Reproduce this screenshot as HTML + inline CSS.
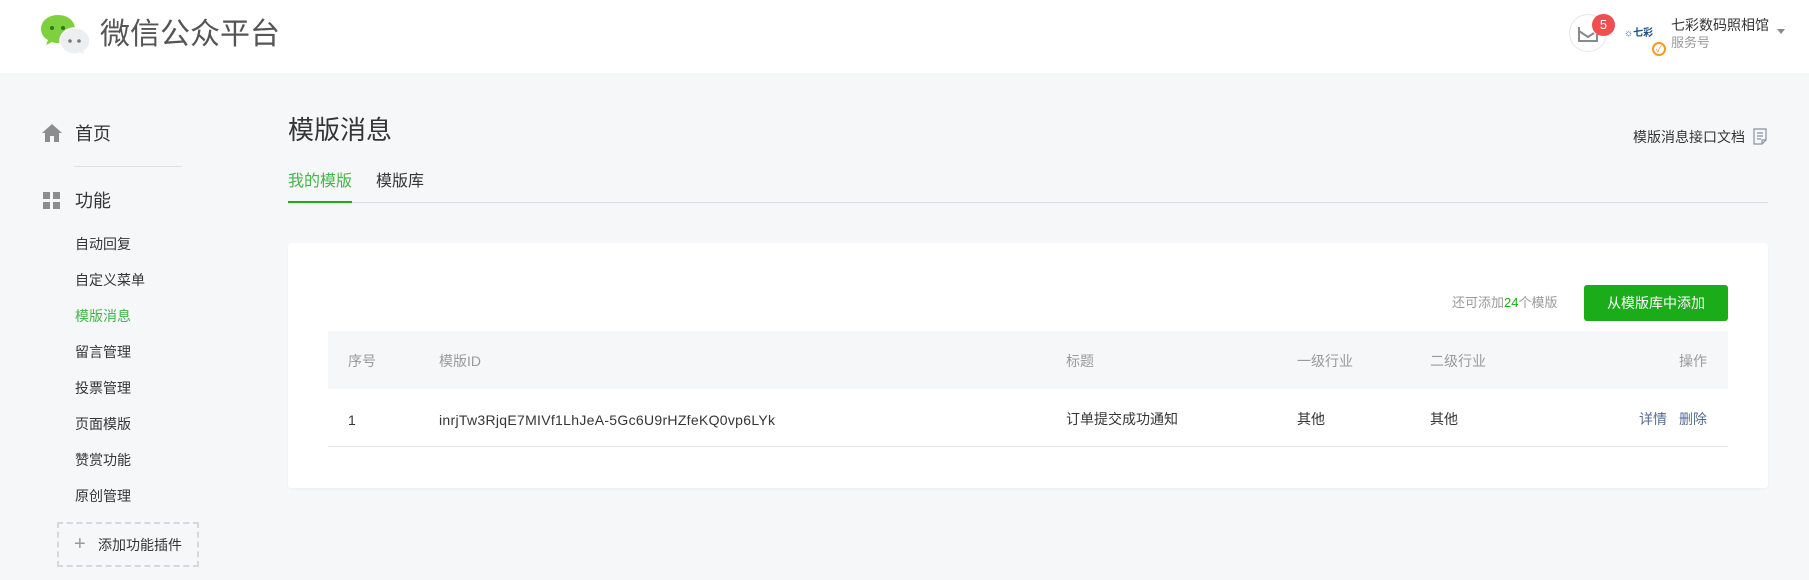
<!DOCTYPE html>
<html><head><meta charset="utf-8"><style>
*{margin:0;padding:0;box-sizing:border-box}
body{width:1809px;height:580px;background:#f6f7f9;font-family:"Liberation Sans","Noto Sans CJK SC",sans-serif;color:#353535;position:relative;overflow:hidden}
.a{position:absolute;white-space:nowrap}
.hdr{position:absolute;left:0;top:0;width:1809px;height:73px;background:#fff}
.sub{position:absolute;left:75px;font-size:14px;line-height:20px}
.th{font-size:14px;line-height:20px;color:#9a9a9a}
.td{font-size:14px;line-height:20px;color:#353535}
</style></head><body>
<div class="hdr"></div>
<svg class="a" style="left:40px;top:14px" width="52" height="46" viewBox="0 0 52 46">
<path d="M18 1C8 1 1 7 1 15c0 5 3 9 7 11l-2 5 6-3c2 1 4 1 6 1 10 0 17-6 17-14S28 1 18 1z" fill="#7ed03f"/>
<circle cx="12" cy="14" r="2" fill="#2a7a1a"/><circle cx="23" cy="14" r="2" fill="#2a7a1a"/>
<path d="M35 14c-9 0-15 6-15 13s6 13 15 13c2 0 3 0 5-1l5 3-1-5c4-2 6-6 6-10 0-7-6-13-15-13z" fill="#eceef0" stroke="#fff" stroke-width="1.5"/>
<circle cx="30" cy="27" r="1.8" fill="#7a7a7a"/><circle cx="39" cy="27" r="1.8" fill="#7a7a7a"/>
</svg>
<div class="a" style="left:100px;top:16px;font-size:30px;line-height:38px;color:#555">微信公众平台</div>
<div class="a" style="left:1569px;top:14px;width:38px;height:38px;border:1px solid #e4e6e8;border-radius:50%;background:#fff"></div>
<svg class="a" style="left:1578px;top:26px" width="20" height="16" viewBox="0 0 20 16"><path d="M1 1v14h18V8M1 5l9 6 6-4" fill="none" stroke="#8a8a8a" stroke-width="2"/></svg>
<div class="a" style="left:1592px;top:14px;width:23px;height:22px;border-radius:11px;background:#f14f4f;color:#fff;font-size:13px;line-height:22px;text-align:center">5</div>
<div class="a" style="left:1624px;top:24px;font-size:10px;color:#1c4f8a;font-weight:bold">☼七彩</div>
<div class="a" style="left:1652px;top:42px;width:14px;height:14px;border:2px solid #f39b22;border-radius:50%;font-size:9px;color:#f39b22;line-height:10px;text-align:center">✓</div>
<div class="a" style="left:1671px;top:15px;font-size:14px;line-height:20px;color:#353535">七彩数码照相馆</div>
<div class="a" style="left:1671px;top:34px;font-size:13px;line-height:18px;color:#9a9a9a">服务号</div>
<div class="a" style="left:1777px;top:29px;width:0;height:0;border:4px solid transparent;border-top:5px solid #8a8a8a"></div>

<svg class="a" style="left:42px;top:124px" width="20" height="18" viewBox="0 0 20 18"><path d="M10 0L0 9h3v9h5v-6h4v6h5V9h3z" fill="#8d8d8d"/></svg>
<div class="a" style="left:75px;top:122px;font-size:18px;line-height:24px">首页</div>
<div class="a" style="left:74px;top:166px;width:108px;height:1px;background:#e0e1e3"></div>
<div class="a" style="left:43px;top:192px;width:7px;height:7px;background:#8d8d8d"></div>
<div class="a" style="left:53px;top:192px;width:7px;height:7px;background:#8d8d8d"></div>
<div class="a" style="left:43px;top:202px;width:7px;height:7px;background:#8d8d8d"></div>
<div class="a" style="left:53px;top:202px;width:7px;height:7px;background:#8d8d8d"></div>
<div class="a" style="left:75px;top:189px;font-size:18px;line-height:24px">功能</div>
<div class="sub" style="top:234px">自动回复</div>
<div class="sub" style="top:270px">自定义菜单</div>
<div class="sub" style="top:306px;color:#44b549">模版消息</div>
<div class="sub" style="top:342px">留言管理</div>
<div class="sub" style="top:378px">投票管理</div>
<div class="sub" style="top:414px">页面模版</div>
<div class="sub" style="top:450px">赞赏功能</div>
<div class="sub" style="top:486px">原创管理</div>
<div class="a" style="left:57px;top:522px;width:142px;height:45px;border:2px dashed #d6d8db"></div>
<div class="a" style="left:74px;top:535px;font-size:20px;line-height:18px;color:#999;font-weight:300">+</div>
<div class="a" style="left:98px;top:535px;font-size:14px;line-height:20px">添加功能插件</div>

<div class="a" style="left:288px;top:113px;font-size:26px;line-height:34px">模版消息</div>
<div class="a" style="left:1633px;top:127px;font-size:14px;line-height:20px">模版消息接口文档</div>
<svg class="a" style="left:1753px;top:128px" width="14" height="17" viewBox="0 0 14 17"><path d="M1 1h12v11l-4 4H1zM4 5h6M4 8h6M4 11h4M9 16v-4h4" fill="none" stroke="#8a93a3" stroke-width="1.2"/></svg>
<div class="a" style="left:288px;top:171px;font-size:16px;line-height:22px;color:#44b549">我的模版</div>
<div class="a" style="left:376px;top:171px;font-size:16px;line-height:22px">模版库</div>
<div class="a" style="left:288px;top:202px;width:1480px;height:1px;background:#dcdee1"></div>
<div class="a" style="left:288px;top:201px;width:64px;height:2px;background:#1aad19"></div>

<div class="a" style="left:288px;top:243px;width:1480px;height:245px;background:#fff;border-radius:3px;box-shadow:0 1px 2px rgba(0,0,0,.04)"></div>
<div class="a" style="left:1452px;top:294px;font-size:13px;line-height:18px;color:#9a9a9a">还可添加<span style="color:#1aad19">24</span>个模版</div>
<div class="a" style="left:1584px;top:285px;width:144px;height:36px;background:#1aad19;border-radius:3px;color:#fff;font-size:14px;line-height:36px;text-align:center">从模版库中添加</div>
<div class="a" style="left:328px;top:331px;width:1400px;height:58px;background:#f6f7f9"></div>
<div class="a th" style="left:348px;top:351px">序号</div>
<div class="a th" style="left:439px;top:351px">模版ID</div>
<div class="a th" style="left:1066px;top:351px">标题</div>
<div class="a th" style="left:1297px;top:351px">一级行业</div>
<div class="a th" style="left:1430px;top:351px">二级行业</div>
<div class="a th" style="left:1679px;top:351px">操作</div>
<div class="a td" style="left:348px;top:410px">1</div>
<div class="a td" style="left:439px;top:410px;letter-spacing:0.3px">inrjTw3RjqE7MIVf1LhJeA-5Gc6U9rHZfeKQ0vp6LYk</div>
<div class="a td" style="left:1066px;top:409px">订单提交成功通知</div>
<div class="a td" style="left:1297px;top:409px">其他</div>
<div class="a td" style="left:1430px;top:409px">其他</div>
<div class="a td" style="left:1639px;top:409px;color:#576b95">详情</div>
<div class="a td" style="left:1679px;top:409px;color:#576b95">删除</div>
<div class="a" style="left:328px;top:446px;width:1400px;height:1px;background:#e4e6e9"></div>
</body></html>
